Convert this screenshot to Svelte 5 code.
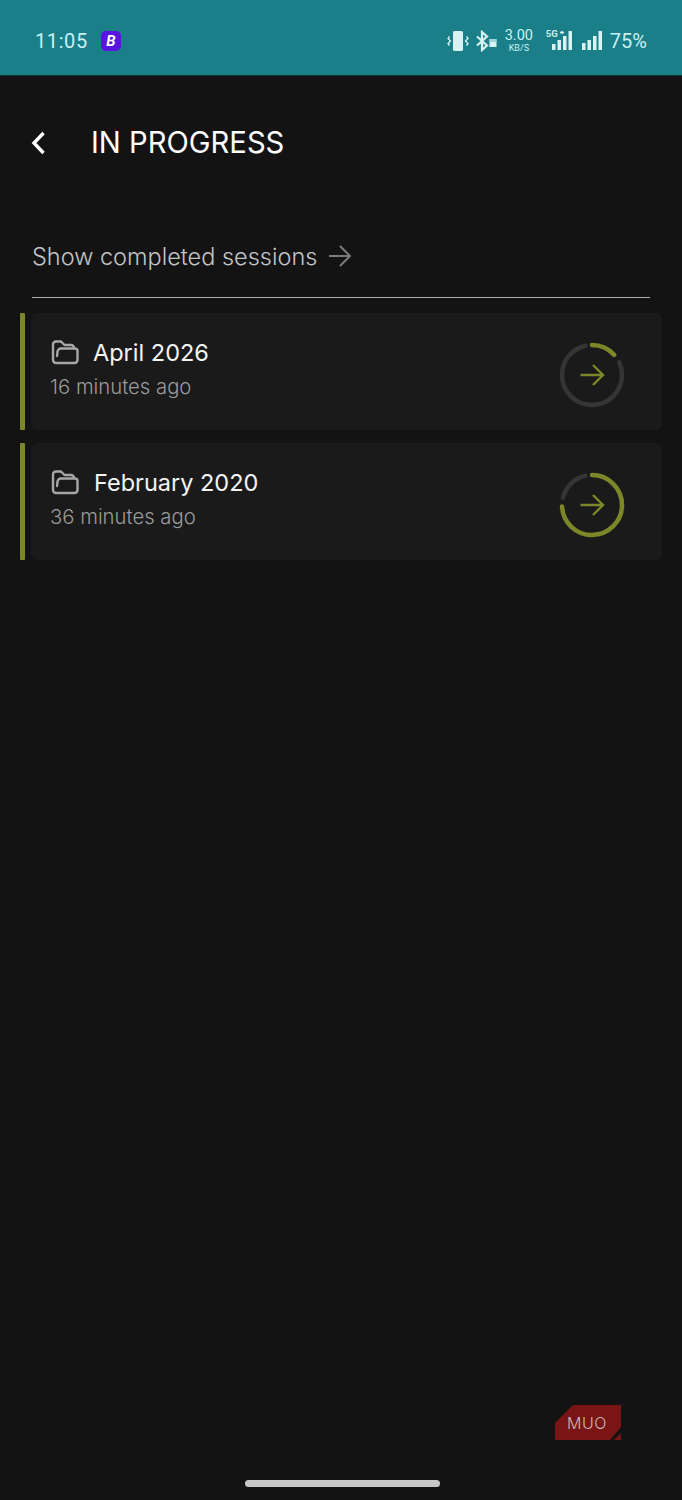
<script>
	const sessions = [
		{ name: "April 2026", ago: "16 minutes ago", progress: 0.133, nameGap: 14 },
		{ name: "February 2020", ago: "36 minutes ago", progress: 0.74, nameGap: 15 }
	];

	const radius = 30;
	const circ = 2 * Math.PI * radius;
	// gray track leaves a gap after the coloured arc and stops short of 12 o'clock
	const gapAfter = 17 / 360;
	const gapBefore = 13 / 360;

	function trackDash(p) {
		const len = circ * (1 - p - gapAfter - gapBefore);
		return `${len} ${circ - len}`;
	}
	function progressDash(p) {
		const len = circ * p;
		return `${len} ${circ - len}`;
	}
</script>

<div class="screen">
	<div class="statusbar">
		<div class="status-left">
			<span class="clock">11:05</span>
			<span class="app-badge"><span>B</span></span>
		</div>
		<div class="status-right">
			<svg class="vibrate" width="22" height="22" viewBox="0 0 22 22">
				<rect x="6" y="1" width="10" height="20" rx="1.500" fill="#d9f3f3" />
				<path d="M2.500 6.500L1 8.500l2.500 2.500L1 13.500l1.500 2M19.500 6.500L21 8.500 18.500 11l2.500 2.500-1.500 2" fill="none" stroke="#d9f3f3" stroke-width="1.300" />
			</svg>
			<svg class="bt" width="21" height="22" viewBox="0 0 21 22">
				<path d="M1 6.500l10 9-5 4.500V2l5 4.500-10 9" fill="none" stroke="#d9f3f3" stroke-width="2.200" />
				<rect x="13.500" y="9" width="7" height="8" fill="#d9f3f3" />
				<rect x="13.500" y="9" width="7" height="3" fill="#9fd5d5" />
			</svg>
			<div class="speed"><span class="speed-num">3.00</span><span class="speed-unit">KB/S</span></div>
			<div class="sig-5g">
				<span class="tag">5G</span>
				<svg width="26" height="22" viewBox="0 0 26 22">
					<path d="M14 2.500h4M16 1v3" stroke="#d9f3f3" stroke-width="1.400" />
					<rect x="6" y="14" width="3.500" height="6" fill="#d9f3f3" />
					<rect x="11.500" y="10" width="3.500" height="10" fill="#d9f3f3" />
					<rect x="17" y="6" width="3.500" height="14" fill="#d9f3f3" />
					<rect x="22.500" y="1" width="3.500" height="19" fill="#d9f3f3" />
				</svg>
			</div>
			<svg class="signal" width="20" height="22" viewBox="0 0 20 22">
				<rect x="0" y="13" width="3.500" height="7" fill="#d9f3f3" />
				<rect x="5.500" y="10" width="3.500" height="10" fill="#d9f3f3" />
				<rect x="11" y="6" width="3.500" height="14" fill="#d9f3f3" />
				<rect x="16.500" y="1" width="3.500" height="19" fill="#d9f3f3" />
			</svg>
			<span class="battery">75%</span>
		</div>
	</div>

	<header class="topbar">
		<svg class="back" width="16" height="24" viewBox="0 0 16 24">
			<path d="M12.500 2L3 12l9.500 10" fill="none" stroke="#fff" stroke-width="3.400" />
		</svg>
		<h1>IN PROGRESS</h1>
	</header>

	<div class="completed">
		<span>Show completed sessions</span>
		<svg width="24" height="24" viewBox="0 0 24 24">
			<path d="M1 12h21M12 2l10 10-10 10" fill="none" stroke="#7b7b7b" stroke-width="2" />
		</svg>
	</div>
	<div class="divider"></div>

	<div class="list">
		{#each sessions as s}
			<div class="row">
				<div class="accent"></div>
				<div class="card">
					<div class="info">
						<div class="title" style="gap: {s.nameGap}px">
							<svg width="29" height="25" viewBox="0 0 29 25">
								<path d="M3 20V4.500a3 3 0 0 1 3-3h5l3.500 3.500h6.500a3 3 0 0 1 3 3M6 23a3 3 0 0 1-3-3M6 23h18.500a3 3 0 0 0 3-3v-9a2.500 2.500 0 0 0-2.500-2.500H11a3.500 3.500 0 0 0-3.500 3.500L7 16" fill="none" stroke="#a8a8a8" stroke-width="2.400" stroke-linecap="round" stroke-linejoin="round" />
							</svg>
							<span>{s.name}</span>
						</div>
						<div class="ago">{s.ago}</div>
					</div>
					<svg class="ring" width="70" height="70" viewBox="0 0 70 70">
						<g transform="rotate(-90 35 35)" fill="none" stroke-width="4.500" stroke-linecap="round">
							<circle cx="35" cy="35" r={radius} stroke="#353535" stroke-dasharray={trackDash(s.progress)} stroke-dashoffset={-circ * (s.progress + gapAfter)} />
							<circle cx="35" cy="35" r={radius} stroke="#7e8727" stroke-dasharray={progressDash(s.progress)} />
						</g>
						<path d="M23.500 35h22M36 25l10 10-10 10" fill="none" stroke="#7e8727" stroke-width="2.400" />
					</svg>
				</div>
			</div>
		{/each}
	</div>

	<div class="watermark">
		<svg width="66" height="35" viewBox="0 0 66 35">
			<path d="M0 35V18L18 0h48v22L55 35z" fill="#7a1515" />
			<path d="M59 35l7-7v7z" fill="#7a1515" />
		</svg>
		<span>MUO</span>
	</div>

	<div class="home-bar"></div>
</div>

<style>
	:global(body) {
		background: #131314;
	}
	.screen {
		position: relative;
		width: 682px;
		height: 1500px;
		background: #131314;
		font-family: Inter, "Liberation Sans", sans-serif;
		overflow: hidden;
	}
	.statusbar {
		height: 76px;
		background: #1b7f89;
		display: flex;
		justify-content: space-between;
		align-items: center;
		padding: 7px 35px 0;
		box-sizing: border-box;
		border-bottom: 1px solid #0d2f33;
		color: #c9f1f1;
		font-family: Roboto, sans-serif;
	}
	.status-left {
		display: flex;
		align-items: center;
		gap: 13px;
	}
	.clock {
		font-size: 20px;
		letter-spacing: 0.6px;
	}
	.app-badge {
		width: 20px;
		height: 20px;
		border-radius: 5px;
		background: #5a14e0;
		display: flex;
		align-items: center;
		justify-content: center;
		color: #fff;
		font: italic 700 15px Roboto, sans-serif;
	}
	.status-right {
		display: flex;
		align-items: center;
	}
	.bt {
		margin-left: 7px;
	}
	.speed {
		display: flex;
		flex-direction: column;
		align-items: center;
		width: 28px;
		line-height: 1;
		margin: 0 13px 0 8px;
	}
	.speed-num {
		font-size: 14.500px;
	}
	.speed-unit {
		font-size: 9px;
	}
	.sig-5g {
		position: relative;
		margin-right: 10px;
	}
	.sig-5g svg {
		display: block;
	}
	.tag {
		position: absolute;
		left: 0;
		top: -1px;
		font-size: 9.500px;
		line-height: 10px;
		font-weight: 700;
	}
	.signal {
		margin-right: 8px;
	}
	.battery {
		font-size: 20px;
	}
	.topbar {
		display: flex;
		align-items: center;
		height: 134px;
		padding-left: 31px;
		box-sizing: border-box;
	}
	.topbar h1 {
		margin: -2px 0 0 44px;
		font-size: 29.200px;
		font-weight: 400;
		color: #fff;
	}
	.back {
		flex: none;
	}
	.completed {
		display: flex;
		align-items: center;
		gap: 11px;
		margin: 29px 0 0 32px;
		height: 34px;
		font-size: 23.500px;
		font-weight: 300;
		color: #c4c4c4;
	}
	.divider {
		height: 1px;
		background: #b0b0b0;
		margin: 24px 32px 0;
	}
	.list {
		display: flex;
		flex-direction: column;
		gap: 13px;
		margin: 15px 20px 0;
	}
	.row {
		display: flex;
		gap: 6px;
		height: 117px;
	}
	.accent {
		width: 5px;
		background: #7e8727;
		border-radius: 1px;
	}
	.card {
		flex: 1;
		background: #1a1a1b;
		border-radius: 6px;
		display: flex;
		justify-content: space-between;
		align-items: center;
		padding: 0 35px 0 19px;
	}
	.title {
		display: flex;
		align-items: center;
		color: #f4f4f4;
		font-size: 23.500px;
		font-weight: 400;
	}
	.ago {
		color: #9a9a9a;
		font-size: 20.300px;
		font-weight: 300;
		margin-top: 7px;
	}
	.info {
		margin-top: -6px;
	}
	.ring {
		margin-top: 7px;
	}
	.watermark {
		position: absolute;
		left: 555px;
		top: 1405px;
		width: 66px;
		height: 35px;
	}
	.watermark span {
		position: absolute;
		left: 12px;
		top: 8px;
		color: #c9b9b9;
		font: 300 16px Inter, sans-serif;
		letter-spacing: 0.5px;
	}
	.home-bar {
		position: absolute;
		left: 245px;
		top: 1480px;
		width: 195px;
		height: 7px;
		border-radius: 4px;
		background: #c8c8c8;
	}
</style>
